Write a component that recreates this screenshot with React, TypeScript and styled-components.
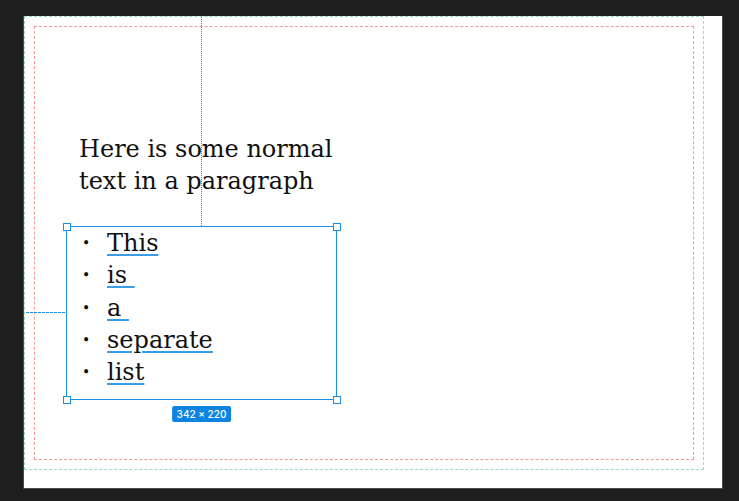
import React from 'react'
import styled, { createGlobalStyle } from 'styled-components'

const Global = createGlobalStyle`
    html, body {
        margin: 0;
        padding: 0;
        background: #1e1e1e;
    }
    body {
        width: 739px;
        height: 501px;
        overflow: hidden;
    }
`

const Stage = styled.div`
    padding: 16px 0 0 23px;
`

const Canvas = styled.div`
    position: relative;
    width: 700px;
    height: 473px;
    background: #ffffff;
    border: 1px solid #4a4a4a;
    border-top: none;
    box-sizing: border-box;
`

const SafeArea = styled.div`
    width: 680px;
    height: 454px;
    border: 1px dashed #98dcbd;
    box-sizing: border-box;
    padding: 9px;
`

const Margin = styled.div`
    height: 100%;
    border: 1px dashed #f29a9a;
    box-sizing: border-box;
    padding: 106px 0 0 31px;
    font-family: "DejaVu Serif", "Liberation Serif", serif;
    color: #111;
`

const Para = styled.p`
    margin: 0 0 29px 13px;
    font-size: 24px;
    line-height: 32px;
    width: 290px;
`

const Selected = styled.div`
    position: relative;
    width: 271px;
    height: 174px;
    border: 1px solid #1b8fe6;
    box-sizing: border-box;
`

const List = styled.ul`
    list-style: none;
    margin: 0;
    padding: 0 0 0 15px;
    font-size: 24px;
    line-height: 32.3px;
`

const Item = styled.li`
    display: flex;
    align-items: center;
    &::before {
        content: '•';
        width: 25px;
        font-size: 14px;
    }
`

const Word = styled.span`
    text-decoration: underline;
    text-decoration-color: #3a9de6;
    text-decoration-thickness: 1.5px;
    text-underline-offset: 3px;
    white-space: pre;
`

const Handle = styled.span<{ $x: 'l' | 'r'; $y: 't' | 'b' }>`
    position: absolute;
    width: 8px;
    height: 8px;
    background: #fff;
    border: 1px solid #1b8fe6;
    box-sizing: border-box;
    ${p => (p.$x === 'l' ? 'left: -4.5px;' : 'right: -4.5px;')}
    ${p => (p.$y === 't' ? 'top: -4.5px;' : 'bottom: -4.5px;')}
`

const Badge = styled.span`
    position: absolute;
    top: 179px;
    left: 50%;
    transform: translateX(-50%);
    background: #0d85e0;
    color: #fff;
    font-family: "Inter", "Liberation Sans", sans-serif;
    font-size: 10px;
    font-weight: 500;
    line-height: 16px;
    padding: 0 5px;
    border-radius: 2px;
    white-space: nowrap;
`

const GuideV = styled.span`
    position: absolute;
    left: 134px;
    top: -210px;
    height: 209px;
    border-left: 1px dotted #1486e8;
`

const GuideH = styled.span`
    position: absolute;
    left: -41px;
    top: 85px;
    width: 40px;
    height: 1px;
    background: repeating-linear-gradient(to right, #1b8fe6 0 3px, #cfe6f8 3px 4px);
`

const words = ['This', 'is ', 'a ', 'separate', 'list']

export default function App() {
    return (
        <Stage>
            <Global />
            <Canvas>
                <SafeArea>
                    <Margin>
                        <Para>Here is some normal text in a paragraph</Para>
                        <Selected>
                            <List>
                                {words.map(w => (
                                    <Item key={w}><Word>{w}</Word></Item>
                                ))}
                            </List>
                            <Handle $x="l" $y="t" />
                            <Handle $x="r" $y="t" />
                            <Handle $x="l" $y="b" />
                            <Handle $x="r" $y="b" />
                            <GuideV />
                            <GuideH />
                            <Badge>342 × 220</Badge>
                        </Selected>
                    </Margin>
                </SafeArea>
            </Canvas>
        </Stage>
    )
}
